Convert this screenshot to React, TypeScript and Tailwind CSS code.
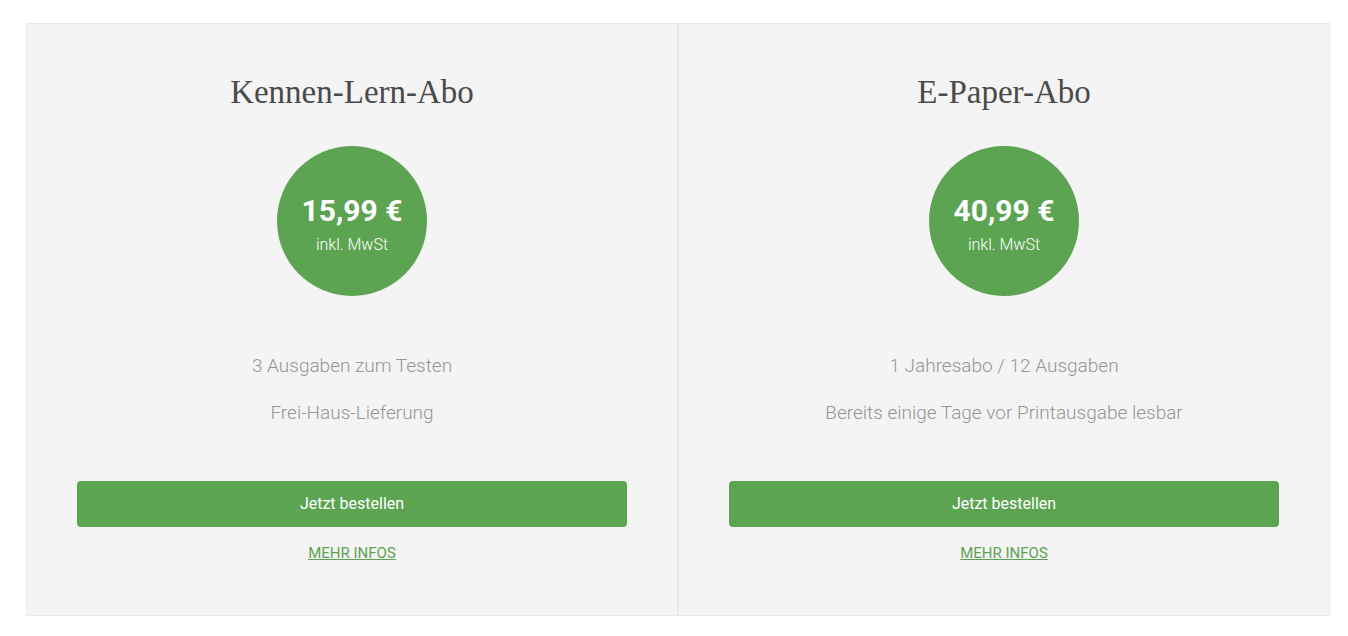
import React from "react";

type Plan = {
  title: string;
  price: string;
  features: string[];
};

const plans: Plan[] = [
  { title: "Kennen-Lern-Abo", price: "15,99 €", features: ["3 Ausgaben zum Testen", "Frei-Haus-Lieferung"] },
  { title: "E-Paper-Abo", price: "40,99 €", features: ["1 Jahresabo / 12 Ausgaben", "Bereits einige Tage vor Printausgabe lesbar"] },
];

function Card({ plan }: { plan: Plan }) {
  return (
    <div className="flex-1 border border-[#e8e8e8] bg-[#f4f4f4] px-[50px] pt-[40px] pb-[52px] flex flex-col items-center">
      <h2 className="text-[33px] leading-[56px] text-[#4a4a4a]" style={{ fontFamily: '"Liberation Serif", serif' }}>
        {plan.title}
      </h2>
      <div className="mt-[26px] w-[150px] h-[150px] rounded-full bg-[#5ca352] flex flex-col items-center justify-center">
        <div className="text-[30px] leading-[34px] font-bold text-white mt-[6px]">{plan.price}</div>
        <div className="text-[16px] leading-[20px] font-light text-white mt-[7px]">inkl. MwSt</div>
      </div>
      <div className="mt-[59px] flex flex-col items-center gap-[25px]">
        {plan.features.map((f) => (
          <div key={f} className="text-[19px] leading-[22px] font-light text-[#949494]">{f}</div>
        ))}
      </div>
      <button className="mt-[57px] w-full h-[46px] rounded-[4px] bg-[#5ca352] text-white text-[16px] font-normal">
        Jetzt bestellen
      </button>
      <a href="#" className="mt-[16px] text-[15px] leading-[20px] text-[#5ca352] underline">
        MEHR INFOS
      </a>
    </div>
  );
}

export default function App() {
  return (
    <div className="w-[1348px] h-[636px] bg-white pt-[23px] pl-[26px]" style={{ fontFamily: 'Roboto, "Open Sans", sans-serif' }}>
      <div className="flex w-[1304px]">
        {plans.map((p) => (
          <Card key={p.title} plan={p} />
        ))}
      </div>
    </div>
  );
}
